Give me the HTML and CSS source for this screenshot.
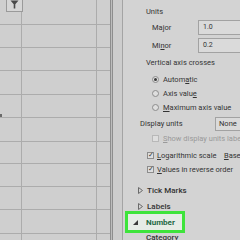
FILE: index.html
```html
<!DOCTYPE html>
<html lang="en">
<head>
    <meta charset="UTF-8">
    <title>Format Axis</title>
    <link rel="stylesheet" href="styles.css">
</head>
<body>
    <div class="screen">
        <div class="sheet">
            <div class="grid">
                <div class="row row-first"><div class="cell-a"></div><div class="cell-b"></div><div class="cell-c"></div></div>
                <div class="row"><div class="cell-a"></div><div class="cell-b"></div><div class="cell-c"></div></div>
                <div class="row"><div class="cell-a"></div><div class="cell-b"></div><div class="cell-c"></div></div>
                <div class="row row-tall"><div class="cell-a"></div><div class="cell-b"></div><div class="cell-c"></div></div>
                <div class="row"><div class="cell-a"></div><div class="cell-b"></div><div class="cell-c"></div></div>
                <div class="row row-tall"><div class="cell-a"></div><div class="cell-b"></div><div class="cell-c"></div></div>
                <div class="row row-short"><div class="cell-a"></div><div class="cell-b"></div><div class="cell-c"></div></div>
                <div class="row"><div class="cell-a"></div><div class="cell-b"></div><div class="cell-c"></div></div>
                <div class="row"><div class="cell-a"></div><div class="cell-b"></div><div class="cell-c"></div></div>
                <div class="row row-tall"><div class="cell-a"></div><div class="cell-b"></div><div class="cell-c"></div></div>
                <div class="row row-last"><div class="cell-a"></div><div class="cell-b"></div><div class="cell-c"></div></div>

                <!-- filter button sitting on the header cell -->
                <div class="filter-btn">
                    <svg width="9" height="9" viewBox="0 0 9 9">
                        <path d="M0.5 0.5 H8.5 L5.3 4.2 V8.5 H3.7 V4.2 Z" fill="#4a4a4a"/>
                    </svg>
                </div>
                <div class="handle-dot"></div>
            </div>
            <div class="splitter"></div>
            <div class="strip"></div>
        </div>

        <div class="panel">
            <div class="line units">Units</div>

            <div class="field major">
                <span class="field-label">Major</span>
                <span class="input">1.0</span>
            </div>
            <div class="field minor">
                <span class="field-label">Mi<u>n</u>or</span>
                <span class="input">0.2</span>
            </div>

            <div class="line vert">Vertical axis crosses</div>

            <div class="option opt-first">
                <span class="radio checked"></span>Autom<u>a</u>tic
            </div>
            <div class="option">
                <span class="radio"></span>Axis valu<u>e</u>
            </div>
            <div class="option">
                <span class="radio"></span><u>M</u>aximum axis value
            </div>

            <div class="field display">
                <span class="field-label wide">Display units</span>
                <span class="select">None</span>
            </div>

            <div class="option disabled">
                <span class="check off"></span><u>S</u>how display units label
            </div>

            <div class="check-row log">
                <span class="check">&#10003;</span><u>L</u>ogarithmic scale
                <span class="base"><u>B</u>ase</span>
            </div>
            <div class="check-row">
                <span class="check">&#10003;</span><u>V</u>alues in reverse order
            </div>

            <div class="section tick">
                <svg class="arrow" width="5" height="7" viewBox="0 0 5 7"><path d="M0.5 0.5 L4.5 3.5 L0.5 6.5 Z" fill="none" stroke="#6a6a6a"/></svg>
                Tick Marks
            </div>
            <div class="section labels">
                <svg class="arrow" width="5" height="7" viewBox="0 0 5 7"><path d="M0.5 0.5 L4.5 3.5 L0.5 6.5 Z" fill="none" stroke="#6a6a6a"/></svg>
                Labels
            </div>
            <div class="section number">
                <svg class="arrow-open" width="5" height="5" viewBox="0 0 5 5"><path d="M5 0 V5 H0 Z" fill="#3a3a3a"/></svg>
                Number
            </div>
            <div class="section category">Category</div>
        </div>
    </div>
</body>
</html>
```

FILE: styles.css
```css
body {
    margin: 0;
    width: 240px;
    height: 240px;
    overflow: hidden;
    background-color: #cfcfcf;
    font-family: Roboto, 'Open Sans', sans-serif;
    color: #333333;
}

.screen {
    display: flex;
    height: 240px;
}

/* spreadsheet side */

.sheet {
    display: flex;
    width: 123px;
    flex-shrink: 0;
}

.grid {
    position: relative;
    width: 110px;
    display: flex;
    flex-direction: column;
}

.row {
    display: flex;
    height: 23px;
    flex-shrink: 0;
    box-sizing: border-box;
    border-bottom: 1px solid #acacac;
}

.row-first { height: 25px; }
.row-tall { height: 24px; }
.row-short { height: 22px; }
.row-last { border-bottom: none; flex: 1; }

.cell-a {
    width: 22px;
    box-sizing: border-box;
    border-right: 1px solid #acacac;
}

.cell-b {
    width: 75px;
    box-sizing: border-box;
    border-right: 1px solid #acacac;
}

.cell-c {
    flex: 1;
}

.filter-btn {
    position: absolute;
    left: 6px;
    top: -1px;
    width: 17px;
    height: 13px;
    box-sizing: border-box;
    border: 1px solid #9a9a9a;
    background-color: #d6d6d6;
    display: flex;
    justify-content: center;
    align-items: flex-start;
}

.handle-dot {
    position: absolute;
    left: 0;
    top: 114px;
    width: 2px;
    height: 3px;
    background-color: #6a6a6a;
}

.splitter {
    width: 3px;
    box-sizing: border-box;
    border-left: 1px solid #8e8e8e;
    border-right: 1px solid #8e8e8e;
    background-color: #bdbdbd;
}

.strip {
    flex: 1;
    border-right: 1px solid #a4a4a4;
    background-color: #cdcdcd;
}

/* format axis panel */

.panel {
    flex: 1;
    background-color: #d3d3d3;
    padding: 4px 0 0 23px;
    font-size: 7.5px;
    display: flex;
    flex-direction: column;
    white-space: nowrap;
}

.line,
.field,
.option,
.check-row,
.section {
    display: flex;
    align-items: center;
    height: 14px;
    flex-shrink: 0;
}

.field {
    height: 15px;
    padding-left: 6px;
}

.major { margin-top: 2px; }
.minor { margin-top: 3px; }
.vert { margin-top: 2px; }

.field-label {
    width: 46px;
}

.field-label.wide {
    width: 75px;
    margin-left: -6px;
}

.input {
    flex: 1;
    height: 15px;
    box-sizing: border-box;
    border: 1px solid #a2a2a2;
    border-right: none;
    background-color: #dadada;
    padding-left: 4px;
    font-size: 7px;
    line-height: 13px;
}

.option {
    padding-left: 6px;
}

.opt-first {
    margin-top: 4px;
    height: 13px;
}

.radio {
    width: 7px;
    height: 7px;
    box-sizing: border-box;
    border-radius: 50%;
    border: 1px solid #8c8c8c;
    background-color: #dedede;
    margin-right: 4px;
    display: flex;
    justify-content: center;
    align-items: center;
}

.radio.checked::after {
    content: '';
    width: 3px;
    height: 3px;
    border-radius: 50%;
    background-color: #3a3a3a;
}

.display {
    margin-top: 2px;
    padding-left: 0;
}

.select {
    flex: 1;
    height: 14px;
    box-sizing: border-box;
    border: 1px solid #a2a2a2;
    border-right: none;
    background-color: #dadada;
    padding-left: 3px;
    line-height: 12px;
}

.disabled {
    color: #9a9a9a;
}

.check {
    width: 7px;
    height: 7px;
    box-sizing: border-box;
    border: 1px solid #8c8c8c;
    background-color: #dedede;
    margin-right: 3px;
    font-size: 7px;
    line-height: 5px;
    text-align: center;
    color: #3a3a3a;
}

.check.off {
    border-color: #b8b8b8;
    margin-right: 4px;
}

.check-row {
    padding-left: 1px;
}

.log { margin-top: 3px; }

.base {
    margin-left: auto;
    width: 19px;
}

.section {
    font-size: 8px;
    font-weight: 500;
    margin-left: -8px;
}

.arrow,
.arrow-open {
    margin-right: 4px;
}

.tick { margin-top: 7px; }
.labels { margin-top: 2px; }

.number {
    height: 22px;
    width: 60px;
    box-sizing: border-box;
    margin-top: -2px;
    margin-left: -21px;
    padding-left: 5px;
    border: 3px solid #3ee43b;
    background-color: #e6ece6;
    color: #1f6a45;
    font-weight: 700;
}

.number .arrow-open {
    margin-right: 8px;
}

.category {
    margin-top: -3px;
    padding-left: 8px;
}
```
